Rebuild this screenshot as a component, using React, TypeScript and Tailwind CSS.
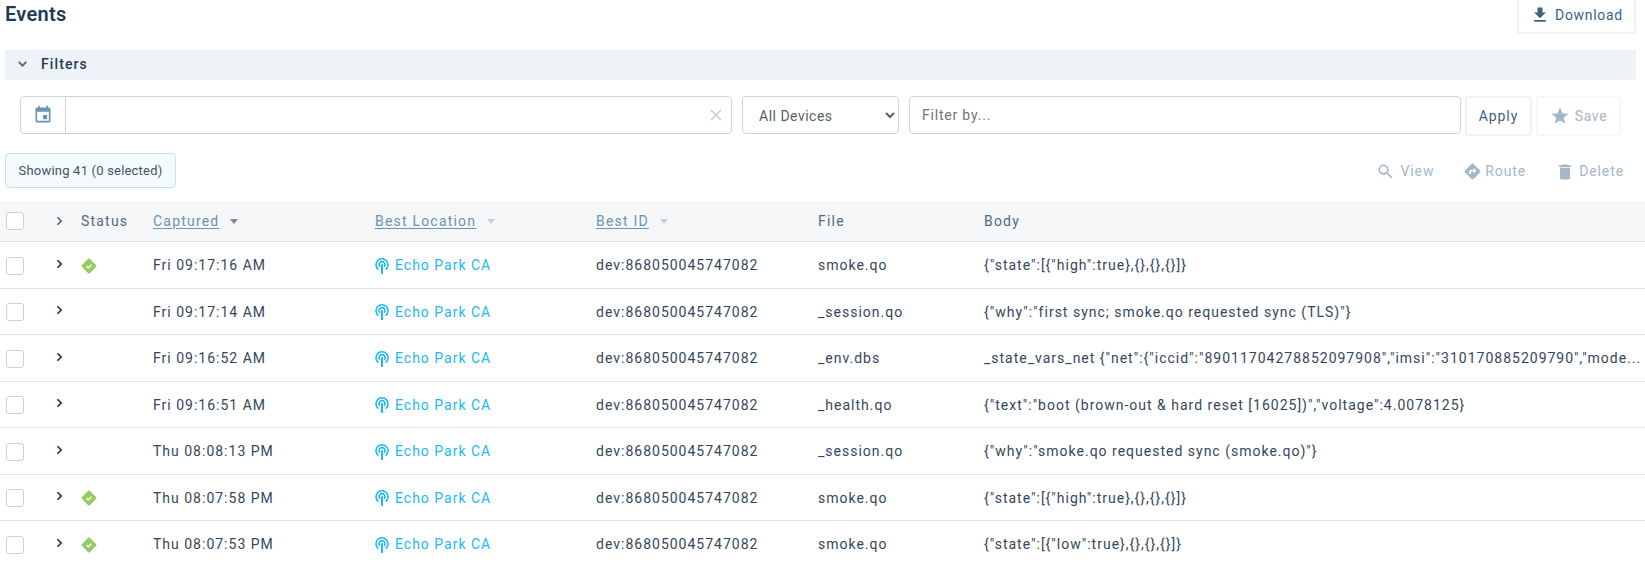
import { MdDelete, MdDirections, MdEvent, MdFileDownload, MdSearch, MdStar } from "react-icons/md";

const rows = [
  { ok: true, time: "Fri 09:17:16 AM", file: "smoke.qo", body: '{"state":[{"high":true},{},{},{}]}' },
  { ok: false, time: "Fri 09:17:14 AM", file: "_session.qo", body: '{"why":"first sync; smoke.qo requested sync (TLS)"}' },
  {
    ok: false,
    time: "Fri 09:16:52 AM",
    file: "_env.dbs",
    body: '_state_vars_net {"net":{"iccid":"89011704278852097908","imsi":"310170885209790","mode...',
  },
  { ok: false, time: "Fri 09:16:51 AM", file: "_health.qo", body: '{"text":"boot (brown-out & hard reset [16025])","voltage":4.0078125}' },
  { ok: false, time: "Thu 08:08:13 PM", file: "_session.qo", body: '{"why":"smoke.qo requested sync (smoke.qo)"}' },
  { ok: true, time: "Thu 08:07:58 PM", file: "smoke.qo", body: '{"state":[{"high":true},{},{},{}]}' },
  { ok: true, time: "Thu 08:07:53 PM", file: "smoke.qo", body: '{"state":[{"low":true},{},{},{}]}' },
];

function Chevron({ className }: { className: string }) {
  return (
    <svg viewBox="0 0 8 12" className={className} fill="none" stroke="currentColor" strokeWidth="2.1">
      <path d="M1.5 1.5 6 6l-4.5 4.5" />
    </svg>
  );
}

function StatusOk() {
  return (
    <svg viewBox="0 0 16 16" className="h-[16px] w-[16px]">
      <rect x="2.35" y="2.35" width="11.3" height="11.3" rx="1.2" fill="#95cb62" transform="rotate(45 8 8)" />
      <path d="M5.6 8.2 7.3 9.8l3.1-3" fill="none" stroke="#fff" strokeWidth="1.2" />
    </svg>
  );
}

function Signal() {
  return (
    <svg viewBox="0 0 14 16" className="h-[16px] w-[14px] shrink-0" fill="none" stroke="#1cb9f5" strokeWidth="1.6">
      <path d="M3.4 11.6a6 6 0 1 1 7.2 0" />
      <path d="M4.9 8.8a3 3 0 1 1 4.2 0" />
      <path d="M7 7v8.2" strokeWidth="2" strokeLinecap="round" />
    </svg>
  );
}

function Checkbox() {
  return <span className="block h-[18px] w-[18px] rounded-[3px] border border-[#ccd1d6] bg-white" />;
}

function SortHead({ label, arrow }: { label: string; arrow: string }) {
  return (
    <span className="flex items-center gap-[11px]">
      <span className="text-[#6a94b3] underline underline-offset-2">{label}</span>
      <span className={`h-0 w-0 border-x-[4.5px] border-t-[5px] border-x-transparent ${arrow}`} />
    </span>
  );
}

export default function App() {
  return (
    <div className="h-[566px] w-full overflow-hidden bg-white font-['Roboto',sans-serif] text-[14px] tracking-[1px] text-[#33475b]">
      <div className="flex h-[50px] items-start justify-between pr-[9px] pl-[5px]">
        <h1 className="pt-[3px] text-[20px] leading-[22px] font-semibold tracking-[0.3px] text-[#1f3b54]">Events</h1>
        <button
          type="button"
          className="-mt-[4px] flex h-[38px] w-[119px] items-center justify-center gap-[5px] rounded-[3px] border-2 border-[#eef2f6] tracking-[0.7px] text-[#3e6280]"
        >
          <MdFileDownload className="h-[20px] w-[20px] text-[#3e6280]" />
          Download
        </button>
      </div>

      <div className="mr-[9px] ml-[5px] flex h-[30px] items-center gap-[15px] bg-[#eef3f7] pb-[2px] pl-[14px] font-medium tracking-[1.1px] text-[#1f3b54]">
        <Chevron className="h-[10px] w-[7px] rotate-90 text-[#4a6a86]" />
        Filters
      </div>

      <div className="mt-[16px] flex items-start pl-[20px]">
        <div className="flex h-[38px] w-[712px] rounded-[4px] border border-[#ced4de]">
          <span className="flex w-[45px] items-center justify-center border-r border-[#ced4de]">
            <MdEvent className="h-[20px] w-[20px] text-[#6a94b3]" />
          </span>
          <span className="flex flex-1 items-center justify-end pr-[9px]">
            <svg viewBox="0 0 12 12" className="h-[12px] w-[12px]" stroke="#b7cfe0" strokeWidth="1.5">
              <path d="M1 1l10 10M11 1 1 11" />
            </svg>
          </span>
        </div>
        <select className="ml-[10px] h-[38px] w-[157px] rounded-[4px] border border-[#ced4de] bg-white pt-[1px] pl-[12px] tracking-[0.5px] text-[#555f6b]">
          <option>All Devices</option>
        </select>
        <input
          placeholder="Filter by..."
          className="ml-[10px] h-[38px] w-[552px] rounded-[4px] border border-[#ced4de] px-[12px] tracking-[0.8px] placeholder:text-[#6c757d]"
        />
        <button type="button" className="ml-[4px] h-[40px] w-[67px] rounded-[3px] border-2 border-[#eef2f6] tracking-[0.9px] text-[#3e6280]">
          Apply
        </button>
        <button
          type="button"
          className="ml-[4px] flex h-[40px] w-[85px] items-center justify-center gap-[5px] rounded-[3px] border-2 border-[#f5f7f9] tracking-[0.6px] text-[#a3b7c7]"
        >
          <MdStar className="h-[20px] w-[20px]" />
          Save
        </button>
      </div>

      <div className="mt-[17px] flex h-[35px] items-center justify-between pr-[21px] pl-[5px] text-[#a3b7c7]">
        <span className="flex h-[35px] w-[171px] items-center justify-center rounded-[4px] border border-[#c5e3ea] bg-[#f3fbfd] text-[13px] tracking-[0.2px] text-[#3f5468]">
          Showing 41 (0 selected)
        </span>
        <div className="flex items-center gap-[29px] pt-[2px] tracking-[0.9px]">
          <span className="flex items-center gap-[5px]">
            <MdSearch className="h-[19px] w-[19px]" />
            View
          </span>
          <span className="flex items-center gap-[3px]">
            <MdDirections className="h-[19px] w-[19px]" />
            Route
          </span>
          <span className="flex items-center gap-[4px]">
            <MdDelete className="h-[20px] w-[20px]" />
            Delete
          </span>
        </div>
      </div>

      <div className="mt-[14px] flex h-[40px] items-center border-y border-t-[#eceef1] border-b-[#dde3e8] bg-[#f6f7f9] pb-[2px] tracking-[1.2px] text-[#4f6a80]">
        <span className="w-[53px] pl-[6px]">
          <Checkbox />
        </span>
        <span className="w-[28px] pl-[3px]">
          <Chevron className="h-[10px] w-[7px] text-[#4a6a86]" />
        </span>
        <span className="w-[72px]">Status</span>
        <span className="w-[222px]">
          <SortHead label="Captured" arrow="border-t-[#7d8790]" />
        </span>
        <span className="w-[221px]">
          <SortHead label="Best Location" arrow="border-t-[#c8ced3]" />
        </span>
        <span className="w-[222px]">
          <SortHead label="Best ID" arrow="border-t-[#c8ced3]" />
        </span>
        <span className="w-[166px]">File</span>
        <span>Body</span>
      </div>

      {rows.map((row) => (
        <div key={row.time} className="flex h-[46.5px] items-center border-b border-[#dde3e8] pt-[2px]">
          <span className="w-[53px] pl-[6px]">
            <Checkbox />
          </span>
          <span className="w-[28px] pb-[4px] pl-[3px]">
            <Chevron className="h-[10px] w-[7px] text-[#1f3b54]" />
          </span>
          <span className="w-[72px]">{row.ok && <StatusOk />}</span>
          <span className="w-[222px]">{row.time}</span>
          <span className="flex w-[221px] items-center gap-[6px] text-[#1cb9f5]">
            <Signal />
            Echo Park CA
          </span>
          <span className="w-[222px]">dev:868050045747082</span>
          <span className="w-[166px]">{row.file}</span>
          <span className="min-w-0 flex-1 whitespace-nowrap">{row.body}</span>
        </div>
      ))}
    </div>
  );
}
